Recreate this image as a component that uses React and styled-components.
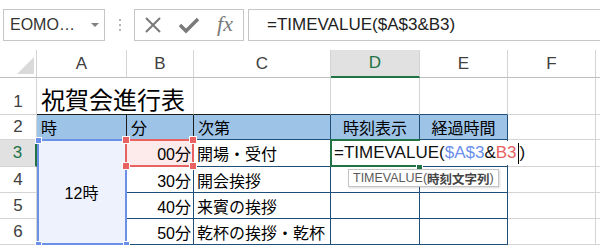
import React from "react"
import styled, { createGlobalStyle } from "styled-components"

const LIGHT = "#d4d4d4"
const NAVY = "#1f4e79"
const INK = "#1c1c1c"
const GREEN = "#217346"
const BLUE = "#6b90ea"
const RED = "#e86262"
const FRAME = "#c6c6c6"

const GlobalStyle = createGlobalStyle`
  html, body {
    margin: 0;
    padding: 0;
    background: #fff;
  }
  body {
    font-family: "Liberation Sans", "Noto Sans CJK JP", sans-serif;
    overflow: hidden;
  }
`

const Page = styled.div`
  width: 600px;
  height: 245px;
  overflow: hidden;
`

// formula bar
const FormulaBar = styled.div`
  display: flex;
  align-items: flex-start;
  height: 50px;
  padding: 9px 0 0 3px;
  box-sizing: border-box;
`

const NameBox = styled.div`
  box-sizing: border-box;
  width: 102px;
  height: 32px;
  border: 1px solid ${FRAME};
  display: flex;
  align-items: center;
  justify-content: space-between;
  padding: 0 5px 0 6px;
  font-size: 16px;
  color: #333;
`

const Arrow = styled.span`
  width: 0;
  height: 0;
  border-left: 4px solid transparent;
  border-right: 4px solid transparent;
  border-top: 4px solid #808080;
`

const Grip = styled.div`
  display: flex;
  flex-direction: column;
  gap: 3px;
  margin: 10px 0 0 14px;

  span {
    width: 2px;
    height: 2px;
    background: #b5b5b5;
  }
`

const ButtonGroup = styled.div`
  box-sizing: border-box;
  width: 110px;
  height: 32px;
  margin-left: 13px;
  border: 1px solid ${FRAME};
  display: grid;
  grid-template-columns: repeat(3, 1fr);
  align-items: center;
  justify-items: center;
  color: #777;
`

const Fx = styled.span`
  font-family: "Liberation Serif", serif;
  font-style: italic;
  font-size: 22px;
  color: #7a7a7a;
  line-height: 1;
  margin-top: -2px;
`

const FormulaInput = styled.div`
  box-sizing: border-box;
  flex: 1;
  height: 32px;
  margin-left: 4px;
  border: 1px solid ${FRAME};
  border-right: none;
  display: flex;
  align-items: center;
  padding-left: 18px;
  font-size: 17px;
  color: #222;
`

// sheet grid
const Sheet = styled.div`
  position: relative;
  display: grid;
  grid-template-columns: 37px 90px 67px 137px 89px 88px 88px 1fr;
  grid-template-rows: 28px 37px 25px 27px 26px 26px 26px;
`

const Corner = styled.div`
  box-sizing: border-box;
  border-right: 1px solid ${LIGHT};
  border-bottom: 1px solid #bdbdbd;
  display: flex;
  align-items: flex-end;
  justify-content: flex-end;
  padding: 0 2px 3px 0;
`

const ColHeader = styled.div`
  box-sizing: border-box;
  display: flex;
  align-items: center;
  justify-content: center;
  font-size: 17px;
  color: ${p => (p.$active ? GREEN : "#404040")};
  background: ${p => (p.$active ? "#e1e1e1" : "#fff")};
  border-right: 1px solid ${LIGHT};
  border-bottom: ${p => (p.$active ? `2px solid ${GREEN}` : "1px solid #bdbdbd")};
`

const RowHeader = styled.div`
  box-sizing: border-box;
  display: flex;
  align-items: ${p => (p.$bottom ? "flex-end" : "center")};
  justify-content: center;
  padding-bottom: ${p => (p.$bottom ? 2 : 0)}px;
  font-size: 17px;
  color: ${p => (p.$active ? GREEN : "#404040")};
  background: ${p => (p.$active ? "#e1e1e1" : "#fff")};
  border-right: ${p => (p.$active ? `2px solid ${GREEN}` : `1px solid ${LIGHT}`)};
  border-bottom: 1px solid ${LIGHT};
`

const Cell = styled.div`
  box-sizing: border-box;
  display: flex;
  align-items: center;
  justify-content: ${p => p.$justify || "flex-start"};
  padding: 0 ${p => p.$pr ?? 3}px 0 ${p => p.$pl ?? 3}px;
  grid-column: ${p => (p.$cols ? `span ${p.$cols}` : "auto")};
  grid-row: ${p => (p.$rows ? `span ${p.$rows}` : "auto")};
  background: ${p => p.$bg || "#fff"};
  border-right: 1px solid ${p => p.$r || LIGHT};
  border-bottom: 1px solid ${p => p.$b || LIGHT};
  font-size: 16px;
  color: #000;
  white-space: nowrap;
  overflow: hidden;
`

const Title = styled(Cell)`
  align-items: flex-end;
  padding: 0 0 3px 4px;
  font-family: "Noto Sans CJK JP", sans-serif;
  font-size: 24px;
  line-height: 1;
`

// overlays
const RangeBox = styled.div`
  position: absolute;
  box-sizing: border-box;
  left: ${p => p.$x}px;
  top: ${p => p.$y}px;
  width: ${p => p.$w}px;
  height: ${p => p.$h}px;
  border: 2px solid ${p => p.$color};
  pointer-events: none;
`

const Handle = styled.span`
  position: absolute;
  box-sizing: border-box;
  width: ${p => p.$size}px;
  height: ${p => p.$size}px;
  background: ${p => p.$color};
  border: 1px solid #fff;
  ${p => (p.$corner.includes("t") ? "top" : "bottom")}: ${p => -1 - p.$size / 2}px;
  ${p => (p.$corner.includes("l") ? "left" : "right")}: ${p => -1 - p.$size / 2}px;
`

const EditBox = styled.div`
  position: absolute;
  left: 332px;
  top: 91px;
  width: 199px;
  height: 24px;
  background: #fff;
  display: flex;
  align-items: center;
  padding-left: 2px;
  box-sizing: border-box;
  font-size: 17px;
  color: #111;
  white-space: nowrap;
`

const Ref = styled.span`
  color: ${p => p.$color};
`

const Caret = styled.span`
  display: inline-block;
  width: 1px;
  height: 21px;
  background: #000;
  margin: 0 1px 0 1px;
`

const Tooltip = styled.div`
  position: absolute;
  left: 348px;
  top: 119px;
  width: 151px;
  height: 18px;
  box-sizing: border-box;
  background: #fff;
  border: 1px solid #c4c4c4;
  box-shadow: 1px 1px 2px rgba(0, 0, 0, 0.15);
  display: flex;
  align-items: center;
  padding-left: 4px;
  font-size: 12.5px;
  color: #5a5a5a;
  white-space: nowrap;

  b {
    color: #444;
    font-weight: bold;
  }
`

const CloseIcon = () => (
  <svg width="18" height="18" viewBox="0 0 18 18">
    <path d="M2 2 L16 16 M16 2 L2 16" stroke="#7a7a7a" strokeWidth="2" fill="none" />
  </svg>
)

const CheckIcon = () => (
  <svg width="22" height="18" viewBox="0 0 22 18">
    <path d="M2 9 L8 15 L20 3" stroke="#7a7a7a" strokeWidth="3.4" fill="none" />
  </svg>
)

const CornerMark = () => (
  <svg width="17" height="17" viewBox="0 0 17 17">
    <polygon points="17,0 17,17 0,17" fill="#dadada" />
  </svg>
)

const Corners = ({ color, size, corners }) =>
  corners.map(c => <Handle key={c} $corner={c} $color={color} $size={size} />)

const columns = ["A", "B", "C", "D", "E", "F"]

const schedule = [
  { min: "00分", item: "開場・受付" },
  { min: "30分", item: "開会挨拶" },
  { min: "40分", item: "来賓の挨拶" },
  { min: "50分", item: "乾杯の挨拶・乾杯" },
]

const App = () => {
  return (
    <Page>
      <GlobalStyle />
      <FormulaBar>
        <NameBox>
          <span>EOMO…</span>
          <Arrow />
        </NameBox>
        <Grip>
          <span />
          <span />
          <span />
        </Grip>
        <ButtonGroup>
          <CloseIcon />
          <CheckIcon />
          <Fx>fx</Fx>
        </ButtonGroup>
        <FormulaInput>=TIMEVALUE($A$3&amp;B3)</FormulaInput>
      </FormulaBar>

      <Sheet>
        <Corner>
          <CornerMark />
        </Corner>
        {columns.map(c => (
          <ColHeader key={c} $active={c === "D"}>
            {c}
          </ColHeader>
        ))}
        <ColHeader />

        {/* row 1 */}
        <RowHeader $bottom>1</RowHeader>
        <Title $cols={2} $b={INK}>祝賀会進行表</Title>
        <Cell $b={INK} />
        <Cell $b={NAVY} />
        <Cell $b={NAVY} />
        <Cell />
        <Cell />

        {/* row 2 */}
        <RowHeader>2</RowHeader>
        <Cell $bg="#9dc3e6" $r={INK} $b={NAVY} $pl={4}>時</Cell>
        <Cell $bg="#9dc3e6" $r={INK} $b={NAVY} $pl={4}>分</Cell>
        <Cell $bg="#9dc3e6" $r={NAVY} $b={NAVY} $pl={4}>次第</Cell>
        <Cell $bg="#9dc3e6" $r={NAVY} $b={NAVY} $justify="center">時刻表示</Cell>
        <Cell $bg="#9dc3e6" $r={NAVY} $b={NAVY} $justify="center">経過時間</Cell>
        <Cell />
        <Cell />

        {/* rows 3-6 */}
        {schedule.map((row, i) => (
          <React.Fragment key={row.min}>
            <RowHeader $active={i === 0}>{i + 3}</RowHeader>
            {i === 0 && (
              <Cell $rows={4} $bg="#eef2fd" $r={NAVY} $b={NAVY} $justify="center">
                12時
              </Cell>
            )}
            <Cell $bg={i === 0 ? "#fdeaea" : "#fff"} $r={NAVY} $b={NAVY} $justify="flex-end" $pr={2}>
              {row.min}
            </Cell>
            <Cell $r={NAVY} $b={NAVY}>{row.item}</Cell>
            <Cell $r={NAVY} $b={NAVY} />
            <Cell $r={NAVY} $b={NAVY} />
            <Cell />
            <Cell />
          </React.Fragment>
        ))}

        <RangeBox $x={37} $y={89} $w={90} $h={106} $color={BLUE}>
          <Corners color={BLUE} size={7} corners={["tl", "bl", "br"]} />
        </RangeBox>
        <RangeBox $x={125} $y={89} $w={69} $h={28} $color={RED}>
          <Corners color={RED} size={8} corners={["tl", "tr", "bl", "br"]} />
        </RangeBox>
        <RangeBox $x={330} $y={89} $w={90} $h={28} $color={GREEN}>
          <Corners color={GREEN} size={7} corners={["br"]} />
        </RangeBox>

        <EditBox>
          =TIMEVALUE(<Ref $color={BLUE}>$A$3</Ref>&amp;<Ref $color={RED}>B3</Ref>
          <Caret />)
        </EditBox>

        <Tooltip>
          TIMEVALUE(<b>時刻文字列</b>)
        </Tooltip>
      </Sheet>
    </Page>
  )
}

export default App
